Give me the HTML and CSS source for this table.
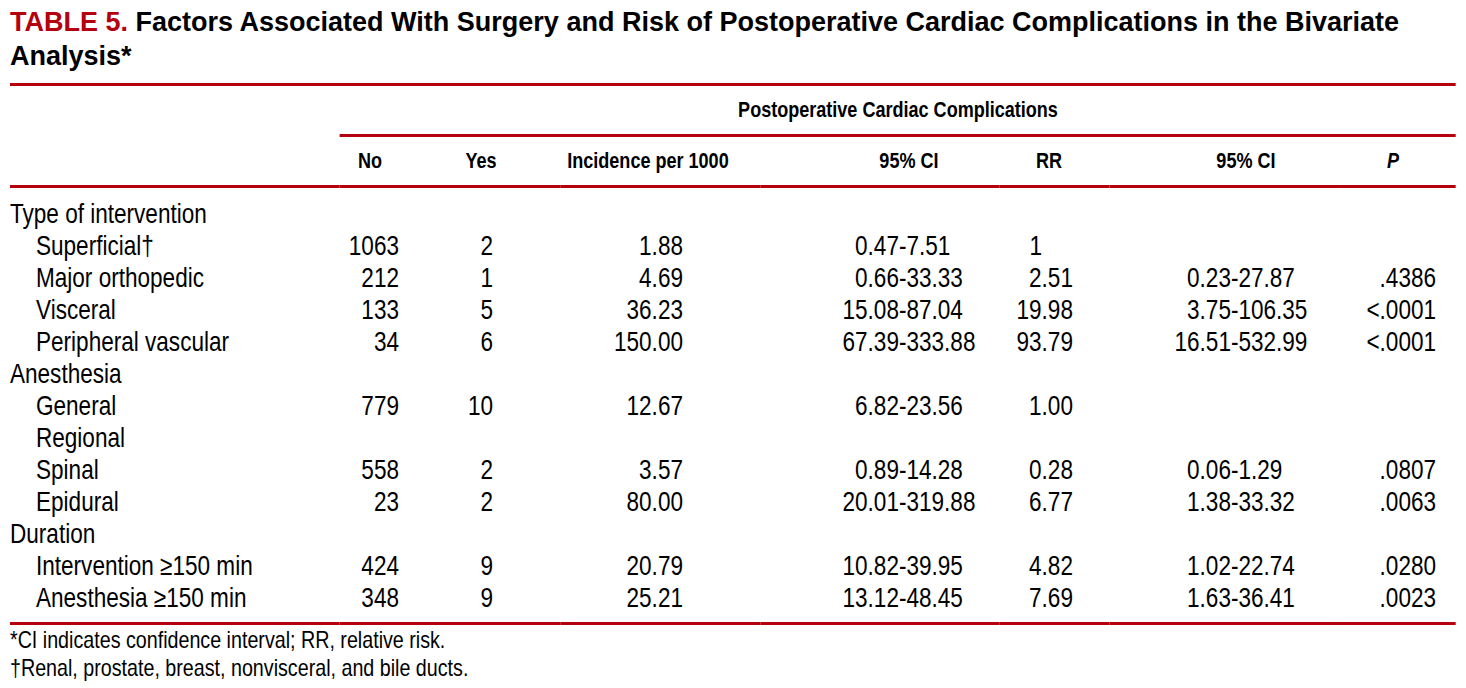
FILE: index.html
```html
<!DOCTYPE html>
<html lang="en">
<head>
<meta charset="utf-8">
<title>Table 5</title>
<link rel="stylesheet" href="styles.css">
</head>
<body>
<div class="page">
  <h1 class="title"><span class="label">TABLE 5.</span> Factors Associated With Surgery and Risk of Postoperative Cardiac Complications in the Bivariate Analysis*</h1>
  <div class="cond">
  <table class="data">
    <colgroup>
      <col class="c-label"><col class="c-no"><col class="c-yes"><col class="c-inc"><col class="c-ci1"><col class="c-rr"><col class="c-ci2"><col class="c-p">
    </colgroup>
    <thead>
      <tr class="h1row">
        <th></th>
        <th colspan="7" class="span">Postoperative Cardiac Complications</th>
      </tr>
      <tr class="h2row">
        <th></th>
        <th class="h-no">No</th>
        <th class="h-yes">Yes</th>
        <th class="h-inc">Incidence per 1000</th>
        <th class="h-ci1">95% CI</th>
        <th class="h-rr">RR</th>
        <th class="h-ci2">95% CI</th>
        <th class="h-p"><i>P</i></th>
      </tr>
    </thead>
    <tbody>
      <tr class="first">
        <td class="lab">Type of intervention</td><td></td><td></td><td></td><td></td><td></td><td></td><td></td>
      </tr>
      <tr>
        <td class="lab sub">Superficial†</td><td class="no">1063</td><td class="yes">2</td><td class="inc">1.88</td>
        <td class="ci1"><span class="lo">0.47</span>-7.51</td><td class="rr int">1</td><td class="ci2"></td><td class="p"></td>
      </tr>
      <tr>
        <td class="lab sub">Major orthopedic</td><td class="no">212</td><td class="yes">1</td><td class="inc">4.69</td>
        <td class="ci1"><span class="lo">0.66</span>-33.33</td><td class="rr">2.51</td><td class="ci2"><span class="lo">0.23</span>-27.87</td><td class="p">.4386</td>
      </tr>
      <tr>
        <td class="lab sub">Visceral</td><td class="no">133</td><td class="yes">5</td><td class="inc">36.23</td>
        <td class="ci1"><span class="lo">15.08</span>-87.04</td><td class="rr">19.98</td><td class="ci2"><span class="lo">3.75</span>-106.35</td><td class="p">&lt;.0001</td>
      </tr>
      <tr>
        <td class="lab sub">Peripheral vascular</td><td class="no">34</td><td class="yes">6</td><td class="inc">150.00</td>
        <td class="ci1"><span class="lo">67.39</span>-333.88</td><td class="rr">93.79</td><td class="ci2"><span class="lo">16.51</span>-532.99</td><td class="p">&lt;.0001</td>
      </tr>
      <tr>
        <td class="lab">Anesthesia</td><td></td><td></td><td></td><td></td><td></td><td></td><td></td>
      </tr>
      <tr>
        <td class="lab sub">General</td><td class="no">779</td><td class="yes">10</td><td class="inc">12.67</td>
        <td class="ci1"><span class="lo">6.82</span>-23.56</td><td class="rr">1.00</td><td class="ci2"></td><td class="p"></td>
      </tr>
      <tr>
        <td class="lab sub">Regional</td><td></td><td></td><td></td><td></td><td></td><td></td><td></td>
      </tr>
      <tr>
        <td class="lab sub">Spinal</td><td class="no">558</td><td class="yes">2</td><td class="inc">3.57</td>
        <td class="ci1"><span class="lo">0.89</span>-14.28</td><td class="rr">0.28</td><td class="ci2"><span class="lo">0.06</span>-1.29</td><td class="p">.0807</td>
      </tr>
      <tr>
        <td class="lab sub">Epidural</td><td class="no">23</td><td class="yes">2</td><td class="inc">80.00</td>
        <td class="ci1"><span class="lo">20.01</span>-319.88</td><td class="rr">6.77</td><td class="ci2"><span class="lo">1.38</span>-33.32</td><td class="p">.0063</td>
      </tr>
      <tr>
        <td class="lab">Duration</td><td></td><td></td><td></td><td></td><td></td><td></td><td></td>
      </tr>
      <tr>
        <td class="lab sub">Intervention ≥150 min</td><td class="no">424</td><td class="yes">9</td><td class="inc">20.79</td>
        <td class="ci1"><span class="lo">10.82</span>-39.95</td><td class="rr">4.82</td><td class="ci2"><span class="lo">1.02</span>-22.74</td><td class="p">.0280</td>
      </tr>
      <tr class="last">
        <td class="lab sub">Anesthesia ≥150 min</td><td class="no">348</td><td class="yes">9</td><td class="inc">25.21</td>
        <td class="ci1"><span class="lo">13.12</span>-48.45</td><td class="rr">7.69</td><td class="ci2"><span class="lo">1.63</span>-36.41</td><td class="p">.0023</td>
      </tr>
    </tbody>
  </table>
  <div class="notes">
    <p>*CI indicates confidence interval; RR, relative risk.</p>
    <p>†Renal, prostate, breast, nonvisceral, and bile ducts.</p>
  </div>
  </div>
</div>
</body>
</html>
```
FILE: styles.css
```css
:root {
  --k: 0.82;
  --red: #b5000d;
}
html, body {
  margin: 0;
  padding: 0;
  background: #ffffff;
}
body {
  color: #000000;
  font-family: "Liberation Sans", Arial, Helvetica, sans-serif;
  overflow: hidden;
}
.page {
  padding: 5px 10px 0 10px;
}
.title {
  margin: 0 0 10px 0;
  font-weight: bold;
  font-size: 27px;
  line-height: 34px;
  color: #000;
}
.title .label {
  color: var(--red);
}

/* Narrow face: Liberation Sans compressed horizontally like Arial Narrow */
.cond {
  width: calc(1446px / var(--k));
  transform: scaleX(var(--k));
  transform-origin: 0 0;
}
.data {
  width: calc(1446px / var(--k));
  table-layout: fixed;
  border-collapse: separate;
  border-spacing: 0;
  border-top: 3px solid var(--red);
}
.c-label { width: calc(330px / var(--k)); }
.c-no { width: calc(80px / var(--k)); }
.c-yes { width: calc(140px / var(--k)); }
.c-inc { width: calc(200px / var(--k)); }
.c-ci1 { width: calc(240px / var(--k)); }
.c-rr { width: calc(110px / var(--k)); }
.c-ci2 { width: calc(230px / var(--k)); }
.c-p { width: calc(116px / var(--k)); }

th {
  font-weight: bold;
  font-size: 22px;
  height: 48px;
  padding: 0;
  line-height: 48px;
  text-align: center;
  white-space: nowrap;
}
.h1row .span {
  border-bottom: 3px solid var(--red);
}
.h2row th {
  border-bottom: 3px solid var(--red);
}
.h-no { padding-right: calc(20px / var(--k)); }
.h-yes { padding-right: calc(18px / var(--k)); }
.h-inc { padding-right: calc(24px / var(--k)); }
.h-ci1 { padding-left: calc(58px / var(--k)); }
.h-rr { padding-right: calc(12px / var(--k)); }
.h-ci2 { padding-left: calc(42px / var(--k)); }
.h-p { padding-right: calc(10px / var(--k)); }

td {
  font-size: 27.5px;
  line-height: 32px;
  height: 32px;
  padding: 0;
  white-space: nowrap;
  vertical-align: middle;
}
tr.first td { padding-top: 10px; }
tr.last td {
  padding-bottom: 8px;
  border-bottom: 3px solid var(--red);
}
.lab { text-align: left; }
.lab.sub { padding-left: calc(26px / var(--k)); }
.no { text-align: right; padding-right: calc(21px / var(--k)); }
.yes { text-align: right; padding-right: calc(67px / var(--k)); }
.inc { text-align: right; padding-right: calc(77px / var(--k)); }
.ci1 { text-align: left; padding-left: calc(79px / var(--k)); }
.ci2 { text-align: left; padding-left: calc(61px / var(--k)); }
.lo {
  display: inline-block;
  width: calc(60px / var(--k));
  text-align: right;
}
.rr { text-align: right; padding-right: calc(37px / var(--k)); }
.rr.int { padding-right: calc(68px / var(--k)); }
.p { text-align: right; padding-right: calc(20px / var(--k)); }

.notes {
  margin-top: 1px;
  font-size: 24px;
  line-height: 28px;
}
.notes p {
  margin: 0;
}
```
